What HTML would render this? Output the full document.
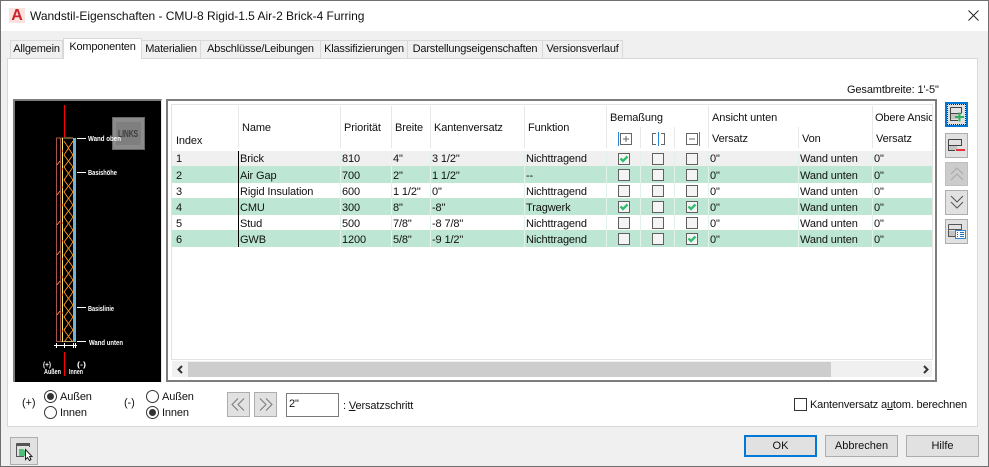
<!DOCTYPE html>
<html lang="de"><head><meta charset="utf-8"><title>Wandstil-Eigenschaften</title>
<style>
html,body{margin:0;padding:0;width:989px;height:467px;overflow:hidden;background:#f0f0f0}
body{font-family:"Liberation Sans",sans-serif;font-size:11px;color:#111;position:relative;letter-spacing:-.12px}
div,span,svg{position:absolute;box-sizing:border-box}
.t{white-space:nowrap;line-height:16px;height:16px}
.tab{top:40px;height:19px;background:#f0f0f0;border:1px solid #d9d9d9;border-bottom:1px solid #d9d9d9;text-align:center;line-height:17px;white-space:nowrap;letter-spacing:-.2px}
.row{left:172px;width:760px;overflow:hidden}
.row span{white-space:nowrap;line-height:16px;top:0;transform:translateY(1px)}
.i{left:4px}.n{left:68px}.p{left:170px}.b{left:221px}.k{left:260px}.f{left:354px}.v{left:538px}.o{left:628px}.u{left:702px}
.sep{width:1px;background:#e0f2ea;top:151px;height:96px}
.hs{width:1px;background:#e8e8e8}
.btn{background:#e1e1e1;border:1px solid #adadad}
.pb{background:#e1e1e1;border:1px solid #adadad;text-align:center;line-height:20px;font-size:11px;letter-spacing:0;top:435px;height:22px;width:73px}
.rd{width:13px;height:13px;border:1px solid #333;border-radius:50%;background:#fff}
.rd.on:after{content:"";position:absolute;left:2px;top:2px;width:7px;height:7px;border-radius:50%;background:#333}
</style></head><body>

<!-- window frame -->
<div style="left:0;top:0;width:989px;height:467px;border:1px solid #6f6f6f;z-index:9;pointer-events:none"></div>
<div style="left:1px;top:1px;width:987px;height:30px;background:#fff"></div>
<div style="left:9px;top:8px;width:16px;height:15px;background:#fbe2df"></div>
<span class="t" style="left:10px;top:8px;width:14px;text-align:center;font-weight:bold;font-size:16px;color:#c9252b;letter-spacing:0">A</span>
<span class="t" style="left:30px;top:8px;font-size:12px;letter-spacing:-.02px;color:#111">Wandstil-Eigenschaften - CMU-8 Rigid-1.5 Air-2 Brick-4 Furring</span>
<svg style="left:968px;top:10px" width="11" height="11" viewBox="0 0 11 11"><path d="M.5 .5L10.5 10.5M10.5 .5L.5 10.5" stroke="#222" fill="none"/></svg>

<!-- tab panel -->
<div style="left:7px;top:58px;width:971px;height:369px;background:#fff;border:1px solid #d9d9d9"></div>
<div class="tab" style="left:10px;width:53px">Allgemein</div>
<div class="tab" style="left:141px;width:60px">Materialien</div>
<div class="tab" style="left:200px;width:121px">Abschlüsse/Leibungen</div>
<div class="tab" style="left:320px;width:88px">Klassifizierungen</div>
<div class="tab" style="left:407px;width:136px">Darstellungseigenschaften</div>
<div class="tab" style="left:542px;width:81px">Versionsverlauf</div>
<div class="tab" style="left:63px;top:38px;width:79px;height:21px;background:#fff;border-bottom:0;line-height:17px">Komponenten</div>

<span class="t" style="left:847px;top:82px">Gesamtbreite: 1'-5"</span>

<!-- preview -->
<div style="left:13px;top:99px;width:149px;height:283px;background:#000;border-top:2px solid #7d7d7d;border-left:2px solid #7d7d7d;border-right:1px solid #e8e8e8"></div>
<svg style="left:13px;top:99px" width="148" height="283" viewBox="13 99 148 283" shape-rendering="crispEdges">
<path d="M64.500 105V137M64.500 352V376" stroke="#f00" fill="none"/>
<path d="M56.500 138V342M60.500 138V342M56 138H64M56 341.500H64" stroke="#a5534c" fill="none"/>
<path d="M62.500 138V342" stroke="#f4ef6a" fill="none"/>
<path d="M64 138H73M64 341.500H73" stroke="#cfa36a" fill="none"/>
<g fill="none" stroke="#e8841a" stroke-width="1">
<path d="M64 141L73 155L64 167L73 180L64 192L73 205L64 217L73 230L64 242L73 255L64 267L73 280L64 292L73 305L64 317L73 330L65 341"/>
<path d="M73 141L64 155L73 167L64 180L73 192L64 205L73 217L64 230L73 242L64 255L73 267L64 280L73 292L64 305L73 317L64 330L72 341"/>
<path d="M57 165L60 161M57 195L60 191M57 225L60 221M57 255L60 251M57 285L60 281M57 315L60 311" stroke="#e0802a"/>
</g>
<path d="M62.500 150v2M62.500 168v2M62.500 186v2M62.500 204v2M62.500 222v2M62.500 240v2M62.500 258v2M62.500 276v2M62.500 294v2M62.500 312v2M62.500 330v2" stroke="#f08a1c" fill="none"/>
<rect x="73" y="138" width="3" height="204" fill="#6fb5d6"/>
<path d="M77 138.500H86M77 172.500H86M77 307.500H86M77 341.500H86M54 345.500H77M56.500 343V348M64.500 343V348M73.500 343V348M75.500 343V348" stroke="#fff" fill="none"/>
<rect x="112.500" y="117.500" width="32" height="32" fill="#8b8b8b" stroke="#666"/>
<rect x="116" y="122" width="25" height="23" fill="#7f7f7f"/>
<g fill="#fff" font-family="Liberation Sans,sans-serif" font-size="7.500" font-weight="bold" letter-spacing="0">
<text x="88" y="141" textLength="33" lengthAdjust="spacingAndGlyphs">Wand oben</text>
<text x="88" y="175" textLength="29" lengthAdjust="spacingAndGlyphs">Basishöhe</text>
<text x="88" y="311" textLength="26" lengthAdjust="spacingAndGlyphs">Basislinie</text>
<text x="89" y="345" textLength="34" lengthAdjust="spacingAndGlyphs">Wand unten</text>
<text x="43" y="367" textLength="8" lengthAdjust="spacingAndGlyphs">(+)</text>
<text x="77" y="367" textLength="9" lengthAdjust="spacingAndGlyphs">(-)</text>
<text x="44" y="374" textLength="17" lengthAdjust="spacingAndGlyphs">Außen</text>
<text x="69" y="374" textLength="14" lengthAdjust="spacingAndGlyphs">Innen</text>
</g>
<text x="118" y="137" textLength="20" lengthAdjust="spacingAndGlyphs" fill="#3d3d3d" font-family="Liberation Sans,sans-serif" font-size="10" font-weight="bold">LINKS</text>
</svg>

<!-- table frame -->
<div style="left:166px;top:99px;width:771px;height:283px;background:#fff;border:2px solid #7d7d7d"></div>
<div style="left:171px;top:104px;width:762px;height:256px;border:1px solid #e3e3e3;background:#fff"></div>

<!-- header -->
<div class="hs" style="left:238px;top:106px;height:42px"></div>
<div class="hs" style="left:340px;top:106px;height:42px"></div>
<div class="hs" style="left:391px;top:106px;height:42px"></div>
<div class="hs" style="left:430px;top:106px;height:42px"></div>
<div class="hs" style="left:524px;top:106px;height:42px"></div>
<div class="hs" style="left:606px;top:106px;height:42px"></div>
<div class="hs" style="left:708px;top:106px;height:42px"></div>
<div class="hs" style="left:872px;top:106px;height:42px"></div>
<div class="hs" style="left:640px;top:127px;height:21px"></div>
<div class="hs" style="left:674px;top:127px;height:21px"></div>
<div class="hs" style="left:798px;top:127px;height:21px"></div>
<span class="t" style="left:176px;top:133px">Index</span>
<span class="t" style="left:242px;top:120px">Name</span>
<span class="t" style="left:344px;top:120px">Priorität</span>
<span class="t" style="left:395px;top:120px">Breite</span>
<span class="t" style="left:434px;top:120px">Kantenversatz</span>
<span class="t" style="left:528px;top:120px">Funktion</span>
<span class="t" style="left:610px;top:110px">Bemaßung</span>
<span class="t" style="left:712px;top:110px">Ansicht unten</span>
<div class="t" style="left:875px;top:110px;width:57px;overflow:hidden">Obere Ansicht</div>
<span class="t" style="left:712px;top:131px">Versatz</span>
<span class="t" style="left:802px;top:131px">Von</span>
<span class="t" style="left:876px;top:131px">Versatz</span>
<svg style="left:610px;top:128px" width="100" height="20" viewBox="610 128 100 20" shape-rendering="crispEdges">
<g fill="none" stroke="#666"><path d="M620.500 133.500H631.500V144.500H620.500ZM623 139H629M626 136V142"/>
<path d="M656 133.500H652.500V144.500H656M661 133.500H664.500V144.500H661"/>
<path d="M686.500 133.500H697.500V144.500H686.500ZM689 139H695"/></g>
<path d="M618.500 132V146M658.500 132V146M699.500 132V146" stroke="#2a86d0" fill="none"/>
</svg>

<!-- rows -->
<div class="row" style="top:151px;height:15px;background:#f0f0f0"><span class="i" style="top:-1px">1</span><span class="n" style="top:-1px">Brick</span><span class="p" style="top:-1px">810</span><span class="b" style="top:-1px">4"</span><span class="k" style="top:-1px">3 1/2"</span><span class="f" style="top:-1px">Nichttragend</span><span class="v" style="top:-1px">0"</span><span class="o" style="top:-1px">Wand unten</span><span class="u" style="top:-1px">0"</span></div>
<div class="row" style="top:166px;height:17px;background:#bde6d5"><span class="i" style="top:1px">2</span><span class="n" style="top:1px">Air Gap</span><span class="p" style="top:1px">700</span><span class="b" style="top:1px">2"</span><span class="k" style="top:1px">1 1/2"</span><span class="f" style="top:1px">--</span><span class="v" style="top:1px">0"</span><span class="o" style="top:1px">Wand unten</span><span class="u" style="top:1px">0"</span></div>
<div class="row" style="top:183px;height:15px;background:#fff"><span class="i">3</span><span class="n">Rigid Insulation</span><span class="p">600</span><span class="b">1 1/2"</span><span class="k">0"</span><span class="f">Nichttragend</span><span class="v">0"</span><span class="o">Wand unten</span><span class="u">0"</span></div>
<div class="row" style="top:198px;height:17px;background:#bde6d5"><span class="i" style="top:1px">4</span><span class="n" style="top:1px">CMU</span><span class="p" style="top:1px">300</span><span class="b" style="top:1px">8"</span><span class="k" style="top:1px">-8"</span><span class="f" style="top:1px">Tragwerk</span><span class="v" style="top:1px">0"</span><span class="o" style="top:1px">Wand unten</span><span class="u" style="top:1px">0"</span></div>
<div class="row" style="top:215px;height:15px;background:#fff"><span class="i">5</span><span class="n">Stud</span><span class="p">500</span><span class="b">7/8"</span><span class="k">-8 7/8"</span><span class="f">Nichttragend</span><span class="v">0"</span><span class="o">Wand unten</span><span class="u">0"</span></div>
<div class="row" style="top:230px;height:17px;background:#bde6d5"><span class="i" style="top:1px">6</span><span class="n" style="top:1px">GWB</span><span class="p" style="top:1px">1200</span><span class="b" style="top:1px">5/8"</span><span class="k" style="top:1px">-9 1/2"</span><span class="f" style="top:1px">Nichttragend</span><span class="v" style="top:1px">0"</span><span class="o" style="top:1px">Wand unten</span><span class="u" style="top:1px">0"</span></div>

<div class="sep" style="left:340px"></div><div class="sep" style="left:391px"></div><div class="sep" style="left:430px"></div><div class="sep" style="left:524px"></div><div class="sep" style="left:606px"></div><div class="sep" style="left:640px"></div><div class="sep" style="left:674px"></div><div class="sep" style="left:708px"></div><div class="sep" style="left:798px"></div><div class="sep" style="left:872px"></div>
<div style="left:238px;top:151px;width:1px;height:96px;background:#000"></div>

<!-- checkboxes -->
<svg style="left:610px;top:150px" width="95" height="98" viewBox="610 150 95 98">
<g fill="#f4f4f4" stroke="#606060" shape-rendering="crispEdges">
<rect x="618.500" y="153.500" width="11" height="11"/><rect x="652.500" y="153.500" width="11" height="11"/><rect x="686.500" y="153.500" width="11" height="11"/>
<rect x="618.500" y="169.500" width="11" height="11"/><rect x="652.500" y="169.500" width="11" height="11"/><rect x="686.500" y="169.500" width="11" height="11"/>
<rect x="618.500" y="185.500" width="11" height="11"/><rect x="652.500" y="185.500" width="11" height="11"/><rect x="686.500" y="185.500" width="11" height="11"/>
<rect x="618.500" y="201.500" width="11" height="11"/><rect x="652.500" y="201.500" width="11" height="11"/><rect x="686.500" y="201.500" width="11" height="11"/>
<rect x="618.500" y="217.500" width="11" height="11"/><rect x="652.500" y="217.500" width="11" height="11"/><rect x="686.500" y="217.500" width="11" height="11"/>
<rect x="618.500" y="233.500" width="11" height="11"/><rect x="652.500" y="233.500" width="11" height="11"/><rect x="686.500" y="233.500" width="11" height="11"/>
</g>
<g fill="none" stroke="#2ebd6e" stroke-width="2.300">
<path d="M620.500 158.500L623 161L627.500 156.500"/><path d="M620.500 206.500L623 209L627.500 204.500"/><path d="M688.500 206.500L691 209L695.500 204.500"/><path d="M688.500 238.500L691 241L695.500 236.500"/>
</g>
</svg>

<!-- scrollbar -->
<div style="left:172px;top:361px;width:760px;height:16px;background:#f0f0f0"></div>
<div style="left:188px;top:362px;width:643px;height:15px;background:#cdcdcd"></div>
<svg style="left:172px;top:362px" width="760" height="15" viewBox="172 362 760 15"><path d="M182 366L178.500 369.500L182 373M924 366L927.500 369.500L924 373" fill="none" stroke="#333" stroke-width="2"/></svg>

<!-- side buttons -->
<div class="btn" style="left:945px;top:102px;width:23px;height:25px;border:2px solid #0078d7"></div>
<div style="left:947px;top:104px;width:19px;height:21px;border:1px dotted #222"></div>
<svg style="left:948px;top:106px" width="18" height="18" viewBox="948 106 18 18" shape-rendering="crispEdges">
<path d="M950.500 107.500H961.500V113.500M950.500 107.500V120.500H958" fill="none" stroke="#444"/><rect x="951" y="114" width="8" height="5" fill="#c4c4c4"/><path d="M950 113.500H961" stroke="#444"/>
<rect x="955" y="116" width="9" height="2" fill="#2db35e"/><rect x="958.500" y="112.500" width="2" height="9" fill="#2db35e"/>
</svg>
<div class="btn" style="left:945px;top:133px;width:23px;height:25px"></div>
<svg style="left:947px;top:137px" width="20" height="16" viewBox="947 137 20 16" shape-rendering="crispEdges">
<path d="M948.500 139.500H961.500V146M948.500 139.500V150.500H955M948 145.500H961" fill="none" stroke="#444"/><rect x="949" y="146" width="8" height="4" fill="#c4c4c4"/><rect x="956" y="149" width="9" height="2" fill="#e5343a"/>
</svg>
<div class="btn" style="left:945px;top:162px;width:23px;height:24px;background:#cccccc;border-color:#bfbfbf"></div>
<svg style="left:948px;top:166px" width="18" height="16" viewBox="0 0 18 16"><path d="M3 8L9 2L15 8M3 14L9 8L15 14" fill="none" stroke="#a8a8a8"/></svg>
<div class="btn" style="left:945px;top:190px;width:23px;height:25px"></div>
<svg style="left:948px;top:194px" width="18" height="16" viewBox="0 0 18 16"><path d="M3 2L9 8L15 2M3 8L9 14L15 8" fill="none" stroke="#555"/></svg>
<div class="btn" style="left:945px;top:219px;width:23px;height:25px"></div>
<svg style="left:947px;top:222px" width="20" height="18" viewBox="947 222 20 18" shape-rendering="crispEdges">
<path d="M948.500 224.500H961.500V230M948.500 224.500V236.500H955M948 229.500H961" fill="none" stroke="#555"/><rect x="949" y="231" width="6" height="5" fill="#c4c4c4"/>
<rect x="955.500" y="230.500" width="10" height="8" fill="#fff" stroke="#2a86d0"/><path d="M957 232.500H958M960 232.500H964M957 234.500H958M960 234.500H964M957 236.500H958M960 236.500H964" stroke="#2a6fb0"/>
</svg>

<!-- bottom controls -->
<span class="t" style="left:22px;top:395px">(+)</span>
<div class="rd on" style="left:44px;top:390px"></div><span class="t" style="left:60px;top:389px">Außen</span>
<div class="rd" style="left:44px;top:406px"></div><span class="t" style="left:60px;top:405px">Innen</span>
<span class="t" style="left:124px;top:395px">(-)</span>
<div class="rd" style="left:146px;top:390px"></div><span class="t" style="left:162px;top:389px">Außen</span>
<div class="rd on" style="left:146px;top:406px"></div><span class="t" style="left:162px;top:405px">Innen</span>
<div class="btn" style="left:227px;top:392px;width:23px;height:25px"></div>
<svg style="left:230px;top:397px" width="17" height="15" viewBox="0 0 17 15"><path d="M8 1.500L2 7.500L8 13.500M14 1.500L8 7.500L14 13.500" fill="none" stroke="#777"/></svg>
<div class="btn" style="left:254px;top:392px;width:23px;height:25px"></div>
<svg style="left:257px;top:397px" width="17" height="15" viewBox="0 0 17 15"><path d="M3 1.500L9 7.500L3 13.500M9 1.500L15 7.500L9 13.500" fill="none" stroke="#777"/></svg>
<div style="left:286px;top:393px;width:53px;height:24px;border:1px solid #7a7a7a;background:#fff"></div>
<span class="t" style="left:289px;top:396px">2"</span>
<span class="t" style="left:343px;top:398px">: <u>V</u>ersatzschritt</span>
<div style="left:794px;top:398px;width:13px;height:13px;border:1px solid #333;background:#fff"></div>
<span class="t" style="left:810px;top:397px;letter-spacing:-.17px">Kantenversatz a<u>u</u>tom. berechnen</span>

<!-- footer -->
<div class="btn" style="left:10px;top:437px;width:28px;height:28px"></div>
<svg style="left:15px;top:442px" width="20" height="20" viewBox="15 442 20 20" shape-rendering="crispEdges">
<path d="M16.500 443.500H29.500V447M16.500 443.500V456.500H24" fill="none" stroke="#555"/><rect x="17" y="444" width="12" height="2" fill="#555"/><path d="M19 449H23L25 451V456H19Z" fill="#4fbf7a"/>
<path d="M25.500 449.500V459.500L27.500 457.500L29.500 460.500L31 459.500L29.500 456.500H32Z" fill="#fff" stroke="#222" shape-rendering="auto"/>
</svg>
<div class="pb" style="left:744px;border:2px solid #0078d7;line-height:18px">OK</div>
<div class="pb" style="left:825px">Abbrechen</div>
<div class="pb" style="left:906px">Hilfe</div>
</body></html>
